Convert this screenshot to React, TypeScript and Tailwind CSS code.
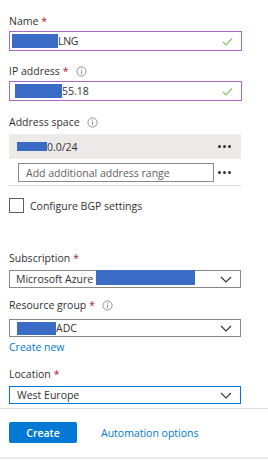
import React from "react";

const Star = () => <span className="text-[#a4262c] ml-[3px]">*</span>;

const Info = () => (
  <svg width="11" height="11" viewBox="0 0 12 12" className="ml-[7px]">
    <circle cx="6" cy="6" r="5" fill="none" stroke="#8a8886" strokeWidth="1" />
    <line x1="6" y1="5" x2="6" y2="9" stroke="#8a8886" strokeWidth="1" />
    <circle cx="6" cy="3.4" r="0.6" fill="#8a8886" />
  </svg>
);

const Check = () => (
  <svg width="11" height="9" viewBox="0 0 11 9">
    <path d="M1 5 L4 8 L10 1.5" fill="none" stroke="#8cc46b" strokeWidth="1.2" />
  </svg>
);

const Chevron = () => (
  <svg width="12" height="7" viewBox="0 0 12 7">
    <path d="M1 1 L6 6 L11 1" fill="none" stroke="#323130" strokeWidth="1.1" />
  </svg>
);

const Dots = () => (
  <div className="flex gap-[2px] items-center">
    <span className="w-[3px] h-[3px] rounded-full bg-[#323130]" />
    <span className="w-[3px] h-[3px] rounded-full bg-[#323130]" />
    <span className="w-[3px] h-[3px] rounded-full bg-[#323130]" />
  </div>
);

const Blob = ({ w, h = 14 }: { w: number; h?: number }) => (
  <span className="inline-block bg-[#3b6cc5]" style={{ width: w, height: h }} />
);

export default function App() {
  return (
    <div
      className="w-[268px] h-[461px] bg-white text-[#323130] text-[10.5px] leading-[14px] flex flex-col relative overflow-hidden"
      style={{ fontFamily: '"Open Sans", "Noto Sans", sans-serif' }}
    >
      <div className="px-[9px] flex flex-col">
        <div className="mt-[14px] h-[14px] flex items-center">
          Name<Star />
        </div>
        <div className="mt-[3px] w-[233px] h-[20px] border-[1.5px] border-[#a866c9] flex items-center pl-[2px] pr-[8px]">
          <Blob w={46} />
          <span className="tracking-[-0.3px]">LNG</span>
          <span className="ml-auto"><Check /></span>
        </div>

        <div className="mt-[13px] h-[14px] flex items-center">
          IP address<Star />
          <Info />
        </div>
        <div className="mt-[3px] w-[233px] h-[20px] border-[1.5px] border-[#a866c9] flex items-center pl-[5px] pr-[8px]">
          <Blob w={47} />
          <span>55.18</span>
          <span className="ml-auto"><Check /></span>
        </div>

        <div className="mt-[14px] h-[14px] flex items-center">
          Address space
          <Info />
        </div>
        <div className="mt-[5px] w-[232px] h-[25px] bg-[#edebe9] flex items-center pl-[8px] pr-[10px]">
          <Blob w={30} h={9} />
          <span>0.0/24</span>
          <span className="ml-auto"><Dots /></span>
        </div>
        <div className="mt-[4px] w-[232px] flex items-center pl-[9px] pr-[10px]">
          <div className="w-[196px] h-[19px] border border-[#8a8886] flex items-center pl-[7px] text-[#605e5c]">
            Add additional address range
          </div>
          <span className="ml-auto"><Dots /></span>
        </div>
        <div className="mt-[3px] w-[232px] h-[1px] bg-[#e1dfdd]" />

        <div className="mt-[12px] flex items-center">
          <span className="w-[15px] h-[15px] border border-[#605e5c] bg-white" />
          <span className="ml-[6px]">Configure BGP settings</span>
        </div>

        <div className="mt-[38px] h-[14px] flex items-center">
          Subscription<Star />
        </div>
        <div className="mt-[5px] w-[232px] h-[18px] border border-[#8a8886] flex items-center pl-[6px] pr-[8px]">
          <span className="whitespace-nowrap">Microsoft Azure (</span>
          <span className="ml-[-3px]"><Blob w={99} h={15} /></span>
          <span className="ml-auto"><Chevron /></span>
        </div>

        <div className="mt-[10px] h-[14px] flex items-center">
          Resource group<Star />
          <Info />
        </div>
        <div className="mt-[7px] w-[232px] h-[18px] border border-[#8a8886] flex items-center pl-[7px] pr-[8px]">
          <Blob w={39} h={13} />
          <span>ADC</span>
          <span className="ml-auto"><Chevron /></span>
        </div>
        <div className="mt-[3px] text-[#0078d4] h-[14px] flex items-center">Create new</div>

        <div className="mt-[13px] h-[14px] flex items-center">
          Location<Star />
        </div>
        <div className="mt-[5px] w-[232px] h-[18px] border border-[#0078d4] flex items-center pl-[7px] pr-[8px]">
          <span>West Europe</span>
          <span className="ml-auto"><Chevron /></span>
        </div>
      </div>

      <div className="mt-[4px] w-full h-[1px] bg-[#e1dfdd]" />

      <div className="px-[9px] mt-[13px] flex items-center">
        <div className="w-[68px] h-[21px] bg-[#0078d4] rounded-[2px] text-white font-semibold flex items-center justify-center">
          Create
        </div>
        <span className="ml-[24px] text-[#0078d4]">Automation options</span>
      </div>

      <div className="absolute left-0 bottom-[2px] w-full h-[2px] bg-[#edebe9]" />
    </div>
  );
}
